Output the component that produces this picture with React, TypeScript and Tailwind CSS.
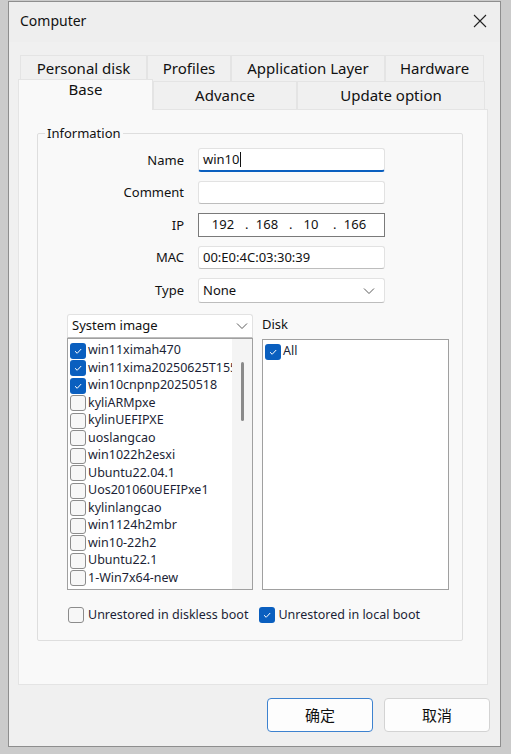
import React from 'react'

const font = { fontFamily: '"Noto Sans", "Noto Sans CJK SC", sans-serif' }

function Check({ checked }: { checked: boolean }) {
  if (checked) {
    return (
      <span className="w-[16px] h-[16px] shrink-0 rounded-[3px] bg-[#0a5fbf] flex items-center justify-center">
        <svg width="10" height="10" viewBox="0 0 10 10">
          <polyline points="2,5.2 4.2,7.3 8.2,3" fill="none" stroke="#fff" strokeWidth="1" />
        </svg>
      </span>
    )
  }
  return <span className="w-[16px] h-[16px] shrink-0 rounded-[3px] border border-[#8c8c8c] bg-[#f7f7f7]" />
}

function Chevron() {
  return (
    <svg width="12" height="8" viewBox="0 0 12 8">
      <polyline points="1,1.5 6,6.5 11,1.5" fill="none" stroke="#5c5c5c" strokeWidth="1" />
    </svg>
  )
}

const images: [string, boolean][] = [
  ['win11ximah470', true],
  ['win11xima20250625T1550', true],
  ['win10cnpnp20250518', true],
  ['kyliARMpxe', false],
  ['kylinUEFIPXE', false],
  ['uoslangcao', false],
  ['win1022h2esxi', false],
  ['Ubuntu22.04.1', false],
  ['Uos201060UEFIPxe1', false],
  ['kylinlangcao', false],
  ['win1124h2mbr', false],
  ['win10-22h2', false],
  ['Ubuntu22.1', false],
  ['1-Win7x64-new', false],
]

function Tab({ label, w }: { label: string; w: string }) {
  return (
    <div className={`${w} h-full border-t border-l border-r border-[#e4e4e4] bg-[#f0f0f0] flex items-center justify-center text-[15px] text-[#111]`}>
      {label}
    </div>
  )
}

function Label({ children }: { children: React.ReactNode }) {
  return <div className="flex items-center justify-end pt-[1px] text-[13px] text-[#111]">{children}</div>
}

export default function App() {
  return (
    <div className="w-[511px] h-[754px] bg-[#cbcbcb] pl-[8px] pt-[1px]" style={font}>
      <div className="w-[493px] h-[746px] border border-[#8e8e8e] bg-[#f0f0f0] flex flex-col">
        {/* title bar */}
        <div className="h-[40px] shrink-0 bg-[#eeeeee] flex items-center justify-between pl-[11px] pr-[13px] pb-[3px]">
          <span className="text-[14px] text-[#111]">Computer</span>
          <svg width="14" height="14" viewBox="0 0 14 14">
            <path d="M1 1 L13 13 M13 1 L1 13" stroke="#222" strokeWidth="1.1" />
          </svg>
        </div>

        {/* tabs */}
        <div className="pl-[9px] pt-[13px] flex flex-col">
          <div className="ml-[2px] h-[26px] flex">
            <Tab label="Personal disk" w="w-[127px]" />
            <Tab label="Profiles" w="w-[84px]" />
            <Tab label="Application Layer" w="w-[154px]" />
            <Tab label="Hardware" w="w-[99px]" />
          </div>
          <div className="h-[28px] flex items-end">
            <div className="relative z-10 w-[135px] h-[31px] -mb-px border-t border-l border-r border-[#e4e4e4] bg-[#f9f9f9] flex items-start justify-center pt-0 text-[15px] leading-[18px] text-[#111]">
              Base
            </div>
            <Tab label="Advance" w="w-[144px]" />
            <Tab label="Update option" w="w-[188px]" />
          </div>

          {/* panel */}
          <div className="w-[470px] h-[576px] border border-[#e4e4e4] bg-[#f9f9f9] flex flex-col">
            <fieldset className="ml-[18px] mt-[15px] w-[426px] h-[516px] border border-[#dedede] rounded-[2px]">
              <legend className="ml-[7px] px-[2px] text-[13px] leading-[16px] text-[#111]">Information</legend>

              <div className="mt-[7px] grid grid-cols-[146px_187px] gap-x-[14px] gap-y-[9px]">
                <Label>Name</Label>
                <div className="h-[24px] bg-white border border-[#e2e2e2] border-b-2 border-b-[#0a5fbf] rounded-[3px] flex items-center pl-[4px] text-[13px] text-[#111]">
                  win10<span className="w-px h-[15px] bg-[#111] ml-px" />
                </div>
                <Label>Comment</Label>
                <div className="h-[23px] bg-white border border-[#e2e2e2] border-b-[#bdbdbd] rounded-[3px]" />
                <Label>IP</Label>
                <div className="h-[24px] bg-white border border-[#7a7a7a] flex items-center pl-[2px] text-[13px] text-[#111]">
                  <span className="w-[44px] text-center">192</span>
                  <span className="w-[44px] flex"><span className="w-[6px]">.</span><span className="flex-1 text-center pr-[6px]">168</span></span>
                  <span className="w-[44px] flex"><span className="w-[6px]">.</span><span className="flex-1 text-center pr-[6px]">10</span></span>
                  <span className="w-[44px] flex"><span className="w-[6px]">.</span><span className="flex-1 text-center pr-[6px]">166</span></span>
                </div>
                <Label>MAC</Label>
                <div className="h-[23px] bg-white border border-[#e2e2e2] border-b-[#bdbdbd] rounded-[3px] flex items-center pl-[4px] text-[13px] text-[#111]">
                  00:E0:4C:03:30:39
                </div>
                <Label>Type</Label>
                <div className="h-[25px] bg-white border border-[#e2e2e2] border-b-[#bdbdbd] rounded-[3px] flex items-center justify-between pl-[4px] pr-[9px] text-[13px] text-[#111]">
                  None
                  <Chevron />
                </div>
              </div>

              {/* image / disk lists */}
              <div className="mt-[11px] ml-[29px] flex gap-[9px]">
                <div className="w-[186px] flex flex-col">
                  <div className="h-[24px] bg-white border border-[#e2e2e2] border-b-[#bdbdbd] rounded-t-[3px] flex items-center justify-between pl-[4px] pr-[4px] text-[13px] text-[#111]">
                    System image
                    <Chevron />
                  </div>
                  <div className="h-[252px] bg-white border border-[#a0a0a0] flex">
                    <div className="flex-1 min-w-0 overflow-hidden pt-[3px] pl-[2px] flex flex-col">
                      {images.map(([name, on]) => (
                        <div key={name} className="h-[17.5px] flex items-center gap-[2px] whitespace-nowrap text-[12.5px] text-[#1c1f36]">
                          <Check checked={on} />
                          <span>{name}</span>
                        </div>
                      ))}
                    </div>
                    <div className="w-[20px] bg-[#f4f4f4] flex justify-center pt-[23px]">
                      <div className="w-[3px] h-[59px] rounded-full bg-[#8a8a8a]" />
                    </div>
                  </div>
                </div>
                <div className="w-[187px] flex flex-col">
                  <div className="h-[25px] flex items-center text-[13px] text-[#111] pb-[4px]">Disk</div>
                  <div className="h-[251px] bg-white border border-[#a0a0a0] pt-[3px] pl-[2px]">
                    <div className="h-[17.5px] flex items-center gap-[2px] text-[12.5px] text-[#1c1f36]">
                      <Check checked />
                      <span>All</span>
                    </div>
                  </div>
                </div>
              </div>

              <div className="mt-[16px] ml-[30px] flex items-center text-[12.5px] text-[#1c1f36]">
                <Check checked={false} />
                <span className="ml-[4px]">Unrestored in diskless boot</span>
                <span className="ml-[11px]"><Check checked /></span>
                <span className="ml-[3px]">Unrestored in local boot</span>
              </div>
            </fieldset>
          </div>
        </div>

        {/* buttons */}
        <div className="mt-[13px] pr-[10px] flex justify-end gap-[11px]">
          <button className="w-[106px] h-[34px] rounded-[4px] border border-[#3d82cf] bg-[#fdfdfd] text-[15px] text-[#111]">确定</button>
          <button className="w-[106px] h-[34px] rounded-[4px] border border-[#d3d3d3] bg-[#fdfdfd] text-[15px] text-[#111]">取消</button>
        </div>
      </div>
    </div>
  )
}
